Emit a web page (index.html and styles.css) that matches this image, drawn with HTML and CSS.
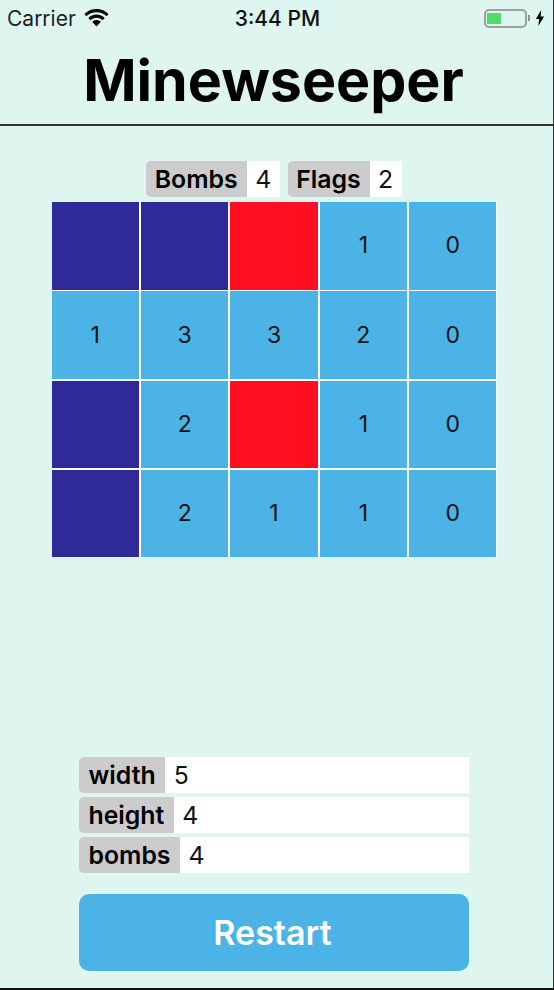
FILE: index.html
```html
<!doctype html>
<html>

<head>
  <title>Minewseeper</title>
  <link rel="stylesheet" href="styles.css">
</head>

<body>
  <div class="app">
    <div class="status-bar">
      <div class="status-left">
        <span>Carrier</span>
        <svg class="wifi" width="25" height="18" viewBox="0 0 25 18">
          <path d="M12.500 0C7.800 0 3.500 1.900.4 5l2 2.200C5 4.600 8.500 3.200 12.500 3.200S20 4.600 22.600 7.200l2-2.200C21.500 1.900 17.200 0 12.500 0z" />
          <path d="M12.500 5.600c-3.200 0-6.100 1.300-8.200 3.400l2 2.200c1.600-1.600 3.800-2.500 6.200-2.500s4.600.9 6.200 2.500l2-2.200c-2.100-2.100-5-3.400-8.200-3.400z" />
          <path d="M12.500 11c-1.700 0-3.200.7-4.300 1.800l4.300 4.700 4.300-4.700C15.700 11.700 14.200 11 12.500 11z" />
        </svg>
      </div>
      <span class="status-time">3:44 PM</span>
      <div class="status-right">
        <div class="battery">
          <div class="battery-level"></div>
        </div>
        <div class="battery-tip"></div>
        <svg width="10" height="16" viewBox="0 0 9 16">
          <path d="M5.700 0L.4 9h3.300L2.800 16 8.600 6.500H5.100z" />
        </svg>
      </div>
    </div>

    <h1 class="title">Minewseeper</h1>

    <main>
      <div class="counters">
        <div class="tag"><span class="tag-label">Bombs</span><span class="tag-value">4</span></div>
        <div class="tag"><span class="tag-label">Flags</span><span class="tag-value">2</span></div>
      </div>

      <div class="board">
        <div class="cell hidden"></div>
        <div class="cell hidden"></div>
        <div class="cell bomb"></div>
        <div class="cell">1</div>
        <div class="cell">0</div>

        <div class="cell">1</div>
        <div class="cell">3</div>
        <div class="cell">3</div>
        <div class="cell">2</div>
        <div class="cell">0</div>

        <div class="cell hidden"></div>
        <div class="cell">2</div>
        <div class="cell bomb"></div>
        <div class="cell">1</div>
        <div class="cell">0</div>

        <div class="cell hidden"></div>
        <div class="cell">2</div>
        <div class="cell">1</div>
        <div class="cell">1</div>
        <div class="cell">0</div>
      </div>

      <form class="settings">
        <div class="field"><span class="field-label">width</span><span class="field-value">5</span></div>
        <div class="field"><span class="field-label">height</span><span class="field-value">4</span></div>
        <div class="field"><span class="field-label">bombs</span><span class="field-value">4</span></div>
        <button type="button" class="restart">Restart</button>
      </form>
    </main>
  </div>
</body>

</html>
```

FILE: styles.css
```css
*,
*::before,
*::after {
  box-sizing: border-box;
}

html {
  font-family: Inter, "Liberation Sans", sans-serif;
  color: #111;
}

body {
  margin: 0;
}

.app {
  display: flex;
  flex-direction: column;
  height: 990px;
  background: #dff6f0;
  border-bottom: 2px solid #111;
  border-right: 1px solid #333;
}

.status-bar {
  display: flex;
  justify-content: space-between;
  align-items: center;
  height: 36px;
  padding: 0 8px 0 7px;
  font-size: 21px;
  color: #222;
}

.status-left {
  display: flex;
  align-items: center;
  gap: 8px;
}

.status-time {
  font-weight: 500;
  color: #111;
  margin-left: -38px;
}

.status-right {
  display: flex;
  align-items: center;
}

.status-right svg {
  margin-left: 5px;
}

.battery {
  width: 43px;
  height: 19px;
  padding: 2px 2px 2px 1px;
  border: 2px solid #98a3a0;
  border-radius: 5px;
}

.battery-level {
  width: 14px;
  height: 100%;
  background: #4fdc6d;
}

.battery-tip {
  width: 2px;
  height: 6px;
  margin-left: 1px;
  background: #8a9490;
}

.title {
  margin: 0 6px 0 0;
  height: 90px;
  padding-top: 11px;
  text-align: center;
  font-size: 57.300px;
  line-height: 66px;
  font-weight: 700;
  color: #000;
}

main {
  flex: 1;
  display: flex;
  flex-direction: column;
  align-items: center;
  padding: 35px 5px 0 0;
  border-top: 2px solid #333;
  margin-top: -2px;
}

.counters {
  display: flex;
  gap: 8px;
  margin-bottom: 5px;
}

.tag {
  display: flex;
  height: 36px;
  font-size: 24.800px;
  line-height: 36px;
}

.tag-label {
  padding: 0 9px 0 8.500px;
  background: #ccc;
  color: #000;
  font-weight: 600;
  border-radius: 5px 0 0 5px;
}

.tag-value {
  padding: 0 8.500px;
  background: #fff;
}

.board {
  display: grid;
  grid-template-columns: repeat(5, 87.600px);
  grid-auto-rows: 87.500px;
  gap: 1.750px;
  width: 445px;
  background: #fff;
  font-size: 23px;
}

.cell {
  display: flex;
  align-items: center;
  justify-content: center;
  padding-bottom: 1px;
  background: #4bb3e6;
}

.cell.hidden {
  background: #2e2b99;
}

.cell.bomb {
  background: #ff0f1f;
}

.settings {
  display: flex;
  flex-direction: column;
  gap: 4px;
  width: 390px;
  margin-top: auto;
  margin-bottom: 17px;
}

.field {
  display: flex;
  height: 36px;
  font-size: 24.800px;
  line-height: 36px;
}

.field-label {
  padding: 0 9.500px;
  background: #ccc;
  color: #000;
  font-weight: 600;
  border-radius: 5px 0 0 5px;
}

.field-value {
  flex: 1;
  padding: 0 8.500px;
  background: #fff;
}

.restart {
  height: 77px;
  margin-top: 17px;
  padding: 0 3px 0 0;
  border: none;
  border-radius: 10px;
  background: #4bb3e6;
  color: #fff;
  font-family: inherit;
  font-size: 34px;
  font-weight: 600;
}
```
